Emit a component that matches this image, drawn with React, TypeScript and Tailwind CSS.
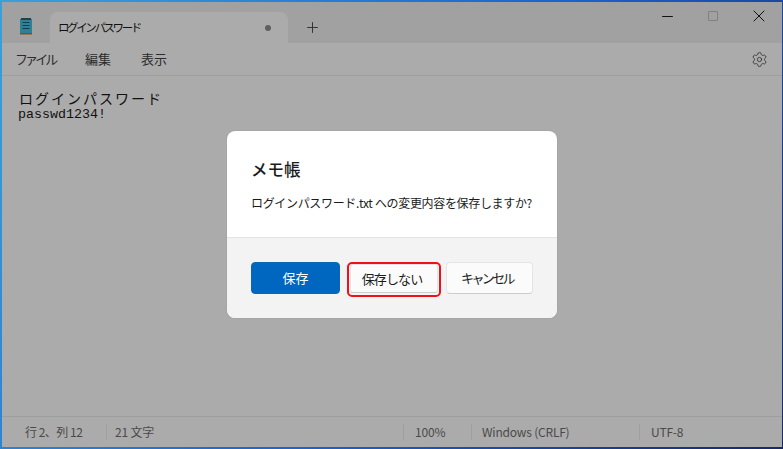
import { Settings, Plus, Minus, X } from "lucide-react";

const jp = "font-['Noto_Sans_CJK_JP','Noto_Sans',sans-serif]";

function NotepadIcon() {
  return (
    <svg width="13" height="17" viewBox="0 0 13 17">
      <rect x="0" y="1" width="12" height="14" fill="#2f7f96" />
      <rect x="1" y="0" width="10" height="2" fill="#23404c" />
      <path d="M2.5 4.5h7M2.5 7.5h7M2.5 10.5h7" stroke="#123f50" strokeWidth="1" />
      <rect x="0" y="15" width="12" height="1.5" fill="#8a4a1c" />
    </svg>
  );
}

function StatusCell({ className, children }: { className: string; children: React.ReactNode }) {
  return (
    <div className={`flex h-[16px] items-center border-l border-[#9f9f9f] ${className}`}>
      {children}
    </div>
  );
}

export default function App() {
  return (
    <div className={`h-[449px] w-[783px] overflow-hidden bg-[linear-gradient(120deg,#3aa0dc,#1c62cc_55%,#17296b)] p-[2px] ${jp}`}>
      <div className="relative flex h-[445px] w-[780px] flex-col overflow-hidden bg-[#ababab]">
        {/* title bar + tab */}
        <div className="flex h-[41px] shrink-0 items-end bg-[#a1a1a1]">
          <div className="flex h-[31px] w-[48px] items-center justify-center pb-[3px]">
            <NotepadIcon />
          </div>
          <div className="flex h-[31px] w-[238px] items-center justify-between rounded-t-[8px] bg-[#ababab] pl-[8px] pr-[17px]">
            <span className="text-[11.5px] tracking-[-2.4px] text-[#111111]">ログインパスワード</span>
            <span className="size-[6px] rounded-full bg-[#5f5f5f]" />
          </div>
          <div className="flex h-[31px] w-[48px] items-center justify-center text-[#333333]">
            <Plus size={17} strokeWidth={1.4} />
          </div>
          <div className="flex h-[41px] flex-1 items-start justify-end pt-[2px]">
            <div className="flex h-[24px] w-[46px] items-center justify-center text-[#111111]">
              <Minus size={17} strokeWidth={1.4} />
            </div>
            <div className="flex h-[24px] w-[46px] items-center justify-center">
              <span className="size-[10px] rounded-[1px] border border-[#808080]" />
            </div>
            <div className="flex h-[24px] w-[46px] items-center justify-center text-[#111111]">
              <X size={20} strokeWidth={1.2} />
            </div>
          </div>
        </div>

        {/* menu */}
        <div className="flex h-[33px] shrink-0 items-center justify-between border-b border-[#9e9e9e] pl-[13px] pr-[14px] text-[13px] text-[#2b2b2b]">
          <div className="flex items-center gap-[30px]">
            <span className="w-[40px] whitespace-nowrap tracking-[-2.9px]">ファイル</span>
            <span className="w-[26px] whitespace-nowrap">編集</span>
            <span className="whitespace-nowrap">表示</span>
          </div>
          <Settings size={17} strokeWidth={1.2} className="text-[#333333]" />
        </div>

        {/* editor */}
        <div className="flex-1 pl-[17px] pt-[14px] text-[#111111]">
          <p className="h-[16px] text-[14px] leading-[16px] tracking-[2px]">ログインパスワード</p>
          <p className="mt-[1px] -ml-[1px] h-[16px] font-['Liberation_Mono',monospace] text-[13.33px] leading-[16px]">passwd1234!</p>
        </div>

        {/* status bar */}
        <div className="flex h-[31px] shrink-0 items-center border-t border-[#9e9e9e] text-[12px] tracking-[-0.2px] text-[#4a4a4a]">
          <span className="w-[104px] pl-[23px] tracking-[-0.5px]">行 2、列 12</span>
          <StatusCell className="w-[297px] pl-[8px]">21 文字</StatusCell>
          <StatusCell className="w-[68px] pl-[11px]">100%</StatusCell>
          <StatusCell className="w-[168px] pl-[10px]">Windows (CRLF)</StatusCell>
          <StatusCell className="flex-1 pl-[11px]">UTF-8</StatusCell>
        </div>

        {/* save dialog */}
        <div className="absolute left-[225px] top-[129px] w-[330px] overflow-hidden rounded-[8px] bg-white shadow-[0_0_1px_#7a7a7a]">
          <div className="h-[107px] border-b border-[#e3e3e3] px-[24px] pt-[24px]">
            <h1 className="text-[16.5px] font-medium leading-[28px] text-[#1b1b1b]">メモ帳</h1>
            <p className="mt-[10px] whitespace-nowrap text-[12px] leading-[20px] tracking-[-0.33px] text-[#1b1b1b]">
              ログインパスワード.txt への変更内容を保存しますか?
            </p>
          </div>
          <div className="flex h-[80px] items-start bg-[#f3f3f3] pl-[24px] pt-[24px] text-[13px]">
            <button className="h-[32px] w-[89px] rounded-[4px] border border-[#0c66b8] bg-[#0067c0] text-white">
              保存
            </button>
            <div className="ml-[7px] rounded-[5px] border-2 border-[#f0101a] px-[1px] pb-[2px]">
              <button className="h-[29px] w-[88px] rounded-[3px] border border-[#e5e5e5] border-b-[#cccccc] bg-[#fbfbfb] pr-[4px] tracking-[-0.9px] text-[#1b1b1b]">
                保存しない
              </button>
            </div>
            <button className="ml-[5px] h-[32px] w-[87px] rounded-[4px] border border-[#e5e5e5] border-b-[#cccccc] bg-[#fbfbfb] pr-[5px] tracking-[-2.6px] text-[#1b1b1b]">
              キャンセル
            </button>
          </div>
        </div>
      </div>
    </div>
  );
}
